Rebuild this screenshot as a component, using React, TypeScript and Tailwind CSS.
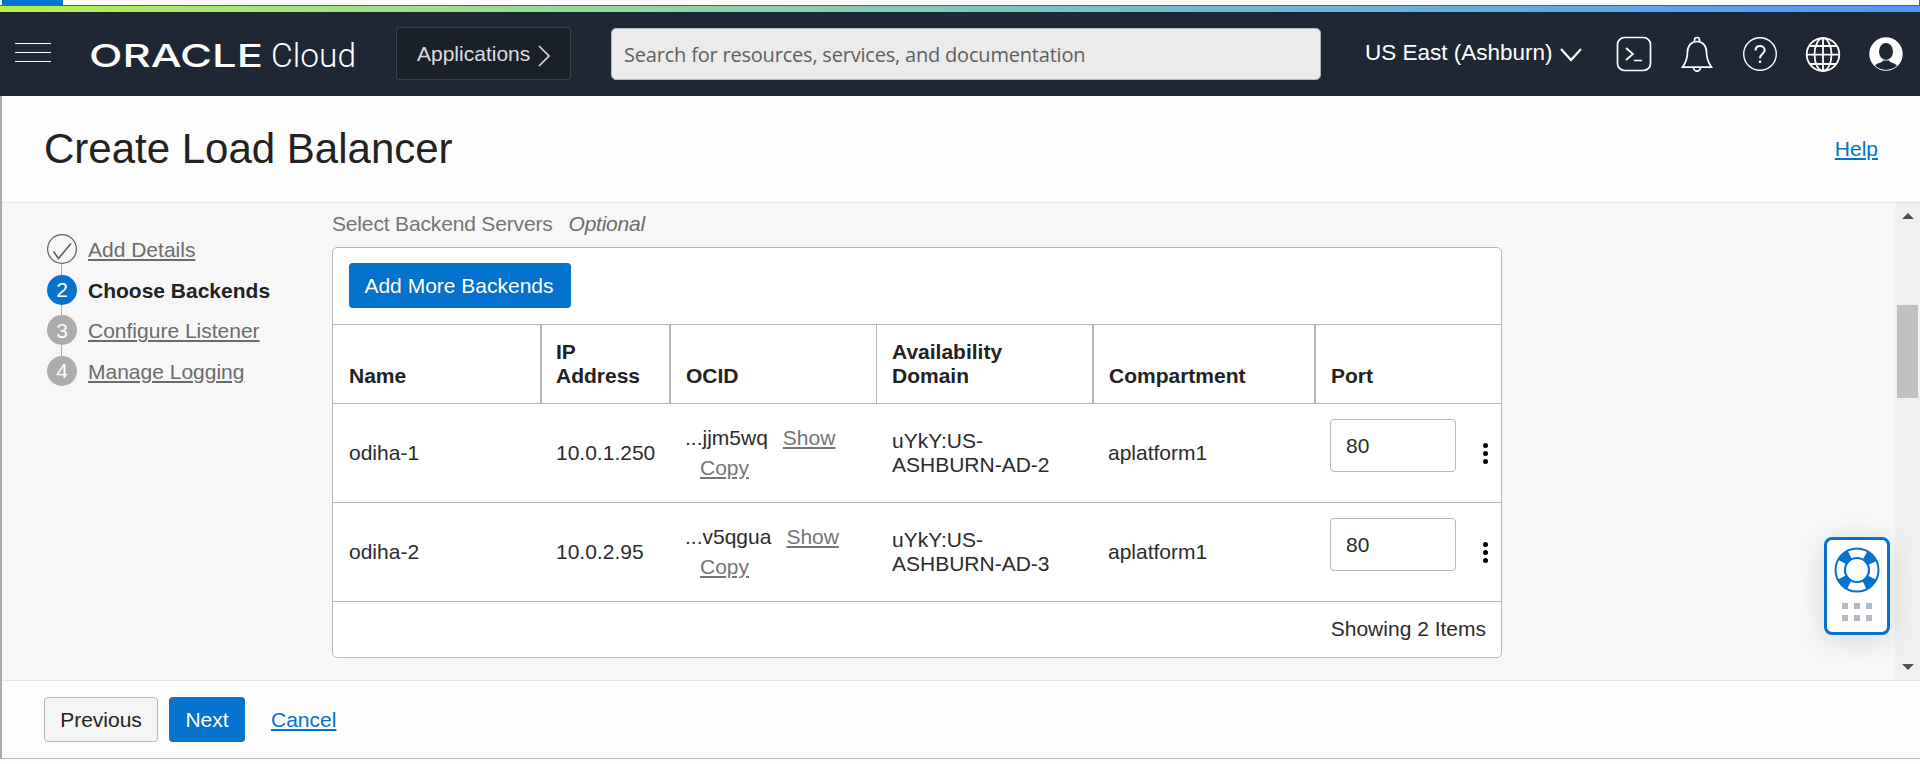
import React from "react";

type Step = { label: string; state: "done" | "current" | "pending" };
type Backend = { name: string; ip: string; ocid: string; domain: string; compartment: string; port: string };

const steps: Step[] = [
  { label: "Add Details", state: "done" },
  { label: "Choose Backends", state: "current" },
  { label: "Configure Listener", state: "pending" },
  { label: "Manage Logging", state: "pending" },
];

const backends: Backend[] = [
  { name: "odiha-1", ip: "10.0.1.250", ocid: "...jjm5wq", domain: "uYkY:US-ASHBURN-AD-2", compartment: "aplatform1", port: "80" },
  { name: "odiha-2", ip: "10.0.2.95", ocid: "...v5qgua", domain: "uYkY:US-ASHBURN-AD-3", compartment: "aplatform1", port: "80" },
];

const columns = ["Name", "IP Address", "OCID", "Availability Domain", "Compartment", "Port"];

const grid = "grid grid-cols-[209px_129px_206px_217px_222px_1fr]";

function Header() {
  return (
    <header className="flex h-[84px] shrink-0 items-start bg-[#1e2733] text-white">
      <button className="ml-[15px] mt-[31px] flex w-9 flex-col gap-2" aria-label="Menu">
        <span className="h-px w-full bg-white" />
        <span className="h-px w-full bg-white" />
        <span className="h-px w-full bg-white" />
      </button>
      <div className="ml-[39px] mt-[24px] flex h-[40px] w-[306px] items-start">
        <svg width="270" height="40" viewBox="0 0 270 40" fill="#fff">
          <text x="-1" y="31" fontFamily="Inter, 'Liberation Sans', sans-serif" fontWeight="500" fontSize="31.5" textLength="174" lengthAdjust="spacingAndGlyphs">
            ORACLE
          </text>
          <text x="181" y="30.500" fontFamily="Roboto, 'Liberation Sans', sans-serif" fontWeight="300" fontSize="34" textLength="85" lengthAdjust="spacingAndGlyphs">
            Cloud
          </text>
        </svg>
      </div>
      <button className="mt-[15px] flex h-[53px] w-[175px] items-center rounded-[3px] border border-[#3a424c] bg-[#19202a] pl-5 text-[21px] text-[#dcdddf]">
        Applications
        <svg className="ml-2 mt-[5px]" width="14" height="22" viewBox="0 0 14 22" fill="none" stroke="#dcdddf" strokeWidth="1.6">
          <path d="M1 1l10 10L1 21" />
        </svg>
      </button>
      <div className="ml-10 mt-4 flex h-[52px] w-[710px] items-center rounded-[5px] border border-[#aeb6c0] bg-[#ebebeb] pt-[2px] pl-[12px] font-['Open_Sans','Noto_Sans',sans-serif] text-[20px] tracking-[-0.200px] text-[#5f5f5f]">
        Search for resources, services, and documentation
      </div>
      <div className="ml-[44px] mt-[27px] flex h-[28px] items-center text-[22.5px] leading-[28px] whitespace-nowrap">
        US East (Ashburn)
        <svg className="ml-[6px] mt-[4px]" width="24" height="16" viewBox="0 0 24 16" fill="none" stroke="#fff" strokeWidth="2.200">
          <path d="M2 2l10 11L22 2" />
        </svg>
      </div>
      <div className="mr-4 ml-auto mt-[24px] flex gap-[27px]">
        <svg width="36" height="36" viewBox="0 0 36 36" fill="none" stroke="#fff" strokeWidth="1.7">
          <rect x="1.5" y="1.5" width="33" height="33" rx="7" />
          <path d="M10 12l7 6-7 6M18 24.5h8" />
        </svg>
        <svg width="36" height="36" viewBox="0 0 36 36" fill="none" stroke="#fff" strokeWidth="1.7">
          <path d="M3.500 31.200H32.500C29.500 27 27.500 22 27.500 16C27.500 9.500 23.500 5.500 18 5.500S8.500 9.500 8.500 16C8.500 22 6.500 27 3.500 31.200Z" />
          <path d="M15.500 6V4a2.500 2.500 0 0 1 5 0V6M14.500 31.200a3.500 4 0 0 0 7 0" />
        </svg>
        <svg width="36" height="36" viewBox="0 0 36 36" fill="none" stroke="#fff" strokeWidth="1.4">
          <circle cx="18" cy="18" r="16.300" />
          <path d="M13.500 14.500c0-3 2-4.500 4.500-4.500s4.700 1.600 4.700 4.300c0 3.400-4.700 3.700-4.700 8" strokeWidth="2" />
          <circle cx="18" cy="25.800" r="1.300" fill="#fff" stroke="none" />
        </svg>
        <svg width="36" height="36" viewBox="0 0 36 36" fill="none" stroke="#fff" strokeWidth="1.8">
          <circle cx="18" cy="18.500" r="16.300" />
          <ellipse cx="18" cy="18.500" rx="8.500" ry="16.300" />
          <path d="M18 2v33M1.700 18.700h32.600M4.500 10h27M4.500 28h27" />
        </svg>
        <svg width="36" height="36" viewBox="0 0 36 36">
          <circle cx="18" cy="18" r="16.700" fill="#fff" />
          <ellipse cx="18" cy="15.500" rx="7" ry="8.500" fill="#1e2733" />
          <path d="M7 29.500C10 26.500 14 27 15 24.500h6C22 27 26 26.500 29 29.500A16 16 0 0 1 7 29.500Z" fill="#1e2733" />
        </svg>
      </div>
    </header>
  );
}

function StepMarker({ step, index }: { step: Step; index: number }) {
  if (step.state === "done") {
    return (
      <svg width="30" height="30" viewBox="0 0 30 30" fill="none" stroke="#5f5f5f">
        <circle cx="15" cy="15" r="14.400" strokeWidth="1.200" />
        <path d="M6.500 17.500l5 7L24 9.500" strokeWidth="1.600" />
      </svg>
    );
  }
  return (
    <span
      className={
        step.state === "current"
          ? "flex size-[30px] items-center justify-center rounded-full bg-[#0572ce] text-[21px] text-white"
          : "flex size-[30px] items-center justify-center rounded-full bg-[#acacac] text-[21px] text-white"
      }
    >
      {index + 1}
    </span>
  );
}

function Steps() {
  return (
    <ol className="ml-[45px] mt-[31px] w-[285px] shrink-0">
      {steps.map((step, i) => (
        <li key={step.label} className="flex h-[40.670px] gap-[11px]">
          <div className="flex w-[30px] flex-col items-center">
            <StepMarker step={step} index={i} />
            {i < steps.length - 1 && <span className="mr-px w-px grow bg-[#acacac]" />}
          </div>
          <span
            className={
              step.state === "current"
                ? "mt-[4px] text-[21px] leading-6 font-bold text-[#222]"
                : "mt-[4px] text-[21px] leading-6 text-[#6b6b6b] underline decoration-[1.500px] underline-offset-[2px]"
            }
          >
            {step.label}
          </span>
        </li>
      ))}
    </ol>
  );
}

function BackendTable() {
  return (
    <section className="h-[411px] w-[1170px] rounded-[5px] border border-[#b0b7c0] bg-white text-[#2b2b2b]">
      <div className="flex h-[76px] pt-[15px] pl-4">
        <button className="h-[45px] w-[222px] rounded bg-[#0572ce] pr-[2px] text-[21px] whitespace-nowrap text-white">Add More Backends</button>
      </div>
      <div className={`${grid} h-[80px] border-y border-[#b0b7c0] font-bold leading-6 text-[#222]`}>
        {columns.map((c, i) => (
          <div
            key={c}
            className={
              i === 5
                ? "flex items-end pb-[15px] pl-[15px]"
                : i === 2
                  ? "flex items-end border-r border-[#b0b7c0] pb-[15px] pl-[15px]"
                  : i === 0
                    ? "flex items-end border-r-2 border-[#b0b7c0] pb-[15px] pl-[16px]"
                    : i === 1
                      ? "flex items-end border-r-2 border-[#b0b7c0] pr-4 pb-[15px] pl-[14px]"
                      : "flex items-end border-r-2 border-[#b0b7c0] pr-4 pb-[15px] pl-[15px]"
            }
          >
            {c}
          </div>
        ))}
      </div>
      {backends.map((b) => (
        <div key={b.name} className={`${grid} h-[99px] items-center border-b border-[#b0b7c0] leading-6`}>
          <span className="pl-[16px]">{b.name}</span>
          <span className="pl-[14px]">{b.ip}</span>
          <div className="pb-[1px] pl-[14px] leading-[30px]">
            <div className="flex gap-[15px]">
              {b.ocid}
              <a className="text-[#757575] underline decoration-2 underline-offset-[2px]">Show</a>
            </div>
            <a className="ml-[15px] text-[#757575] underline decoration-2 underline-offset-[2px]">Copy</a>
          </div>
          <span className="w-[190px] pl-[15px]">{b.domain}</span>
          <span className="pl-[14px]">{b.compartment}</span>
          <div className="flex h-full items-start pl-[14px]">
            <div className="mt-[15px] flex h-[53px] w-[126px] items-center rounded border border-[#b0b7c0] pl-[15px]">{b.port}</div>
            <div className="mt-[39px] ml-[27px] flex w-[5px] flex-col gap-[3px]">
              <span className="size-[5px] rounded-full bg-black" />
              <span className="size-[5px] rounded-full bg-black" />
              <span className="size-[5px] rounded-full bg-black" />
            </div>
          </div>
        </div>
      ))}
      <div className="flex h-[54px] items-center justify-end pr-[15px]">Showing 2 Items</div>
    </section>
  );
}

function Scrollbar() {
  return (
    <div className="flex w-[25px] flex-col items-center bg-[#f0f0f0]">
      <svg className="mt-[10px]" width="12" height="6" viewBox="0 0 12 6" fill="#505050">
        <path d="M6 0L12 6H0z" />
      </svg>
      <div className="mt-[86px] h-[93px] w-[21px] bg-[#c1c1c1]" />
      <svg className="mt-auto mb-[10px]" width="12" height="6" viewBox="0 0 12 6" fill="#505050">
        <path d="M6 6L12 0H0z" />
      </svg>
    </div>
  );
}

function SupportWidget() {
  return (
    <div className="absolute top-[537px] left-[1824px] flex h-[98px] w-[66px] flex-col items-center rounded-lg border-3 border-[#0572ce] bg-white shadow-[0_5px_28px_rgba(30,50,50,0.14)]">
      <svg className="mt-[7px]" width="46" height="46" viewBox="0 0 46 46" fill="none">
        <circle cx="23" cy="23" r="17" stroke="#0572ce" strokeWidth="10" strokeDasharray="10.600 16.104" strokeDashoffset="-8.052" />
        <circle cx="23" cy="23" r="21.500" stroke="#0572ce" strokeWidth="2" />
        <circle cx="23" cy="23" r="12" stroke="#0572ce" strokeWidth="2.200" />
      </svg>
      <div className="mt-[10px] grid grid-cols-3 gap-[6px]">
        {[0, 1, 2, 3, 4, 5].map((n) => (
          <span key={n} className="size-[6px] bg-[#b5bac2]" />
        ))}
      </div>
    </div>
  );
}

export default function App() {
  return (
    <div className="relative flex h-[764px] w-[1920px] flex-col overflow-hidden bg-[#fcfcfc] font-['Liberation_Sans',Arial,sans-serif] text-[21px]">
      <div className="flex h-[5px] shrink-0 justify-between">
        <div className="ml-[2px] w-[61px] bg-[#0572ce]" />
        <div className="w-px bg-[#0572ce]" />
      </div>
      <div className="h-px shrink-0 bg-[#1a6fc0]" />
      <div className="h-[6px] shrink-0 bg-linear-to-r from-[#b5ef45] to-[#5096ff]" />
      <Header />
      <main className="flex h-[663px] shrink-0 flex-col border-b border-l-2 border-[#b0b7c0] border-l-[#acacac]">
        <div className="flex h-[107px] shrink-0 items-center justify-between border-b border-[#e4e4e4] pr-[42px] pl-[42px]">
          <h1 className="text-[42px] leading-[50px] text-[#222]">Create Load Balancer</h1>
          <a className="text-[21px] text-[#0572ce] underline decoration-2 underline-offset-[2px]">Help</a>
        </div>
        <div className="flex h-[477px] shrink-0 bg-[#f7f7f7]">
          <Steps />
          <div className="flex grow flex-col pt-[9px]">
            <div className="mb-[11px] flex h-6 items-center gap-4 leading-6 text-[#757575]">
              <span className="tracking-[-0.160px]">Select Backend Servers</span>
              <em className="tracking-[-0.250px] text-[#6b6b6b]">Optional</em>
            </div>
            <BackendTable />
          </div>
          <Scrollbar />
        </div>
        <div className="flex grow items-start border-t border-[#e4e4e4] pt-4 pl-[42px]">
          <button className="h-[45px] w-[114px] rounded border border-[#b0b7c0] bg-[#f5f5f5] text-[#222]">Previous</button>
          <button className="ml-[11px] h-[45px] w-[76px] rounded bg-[#0572ce] text-white">Next</button>
          <a className="ml-[26px] leading-[45px] text-[#0572ce] underline decoration-2 underline-offset-[2px]">Cancel</a>
        </div>
      </main>
      <SupportWidget />
    </div>
  );
}
